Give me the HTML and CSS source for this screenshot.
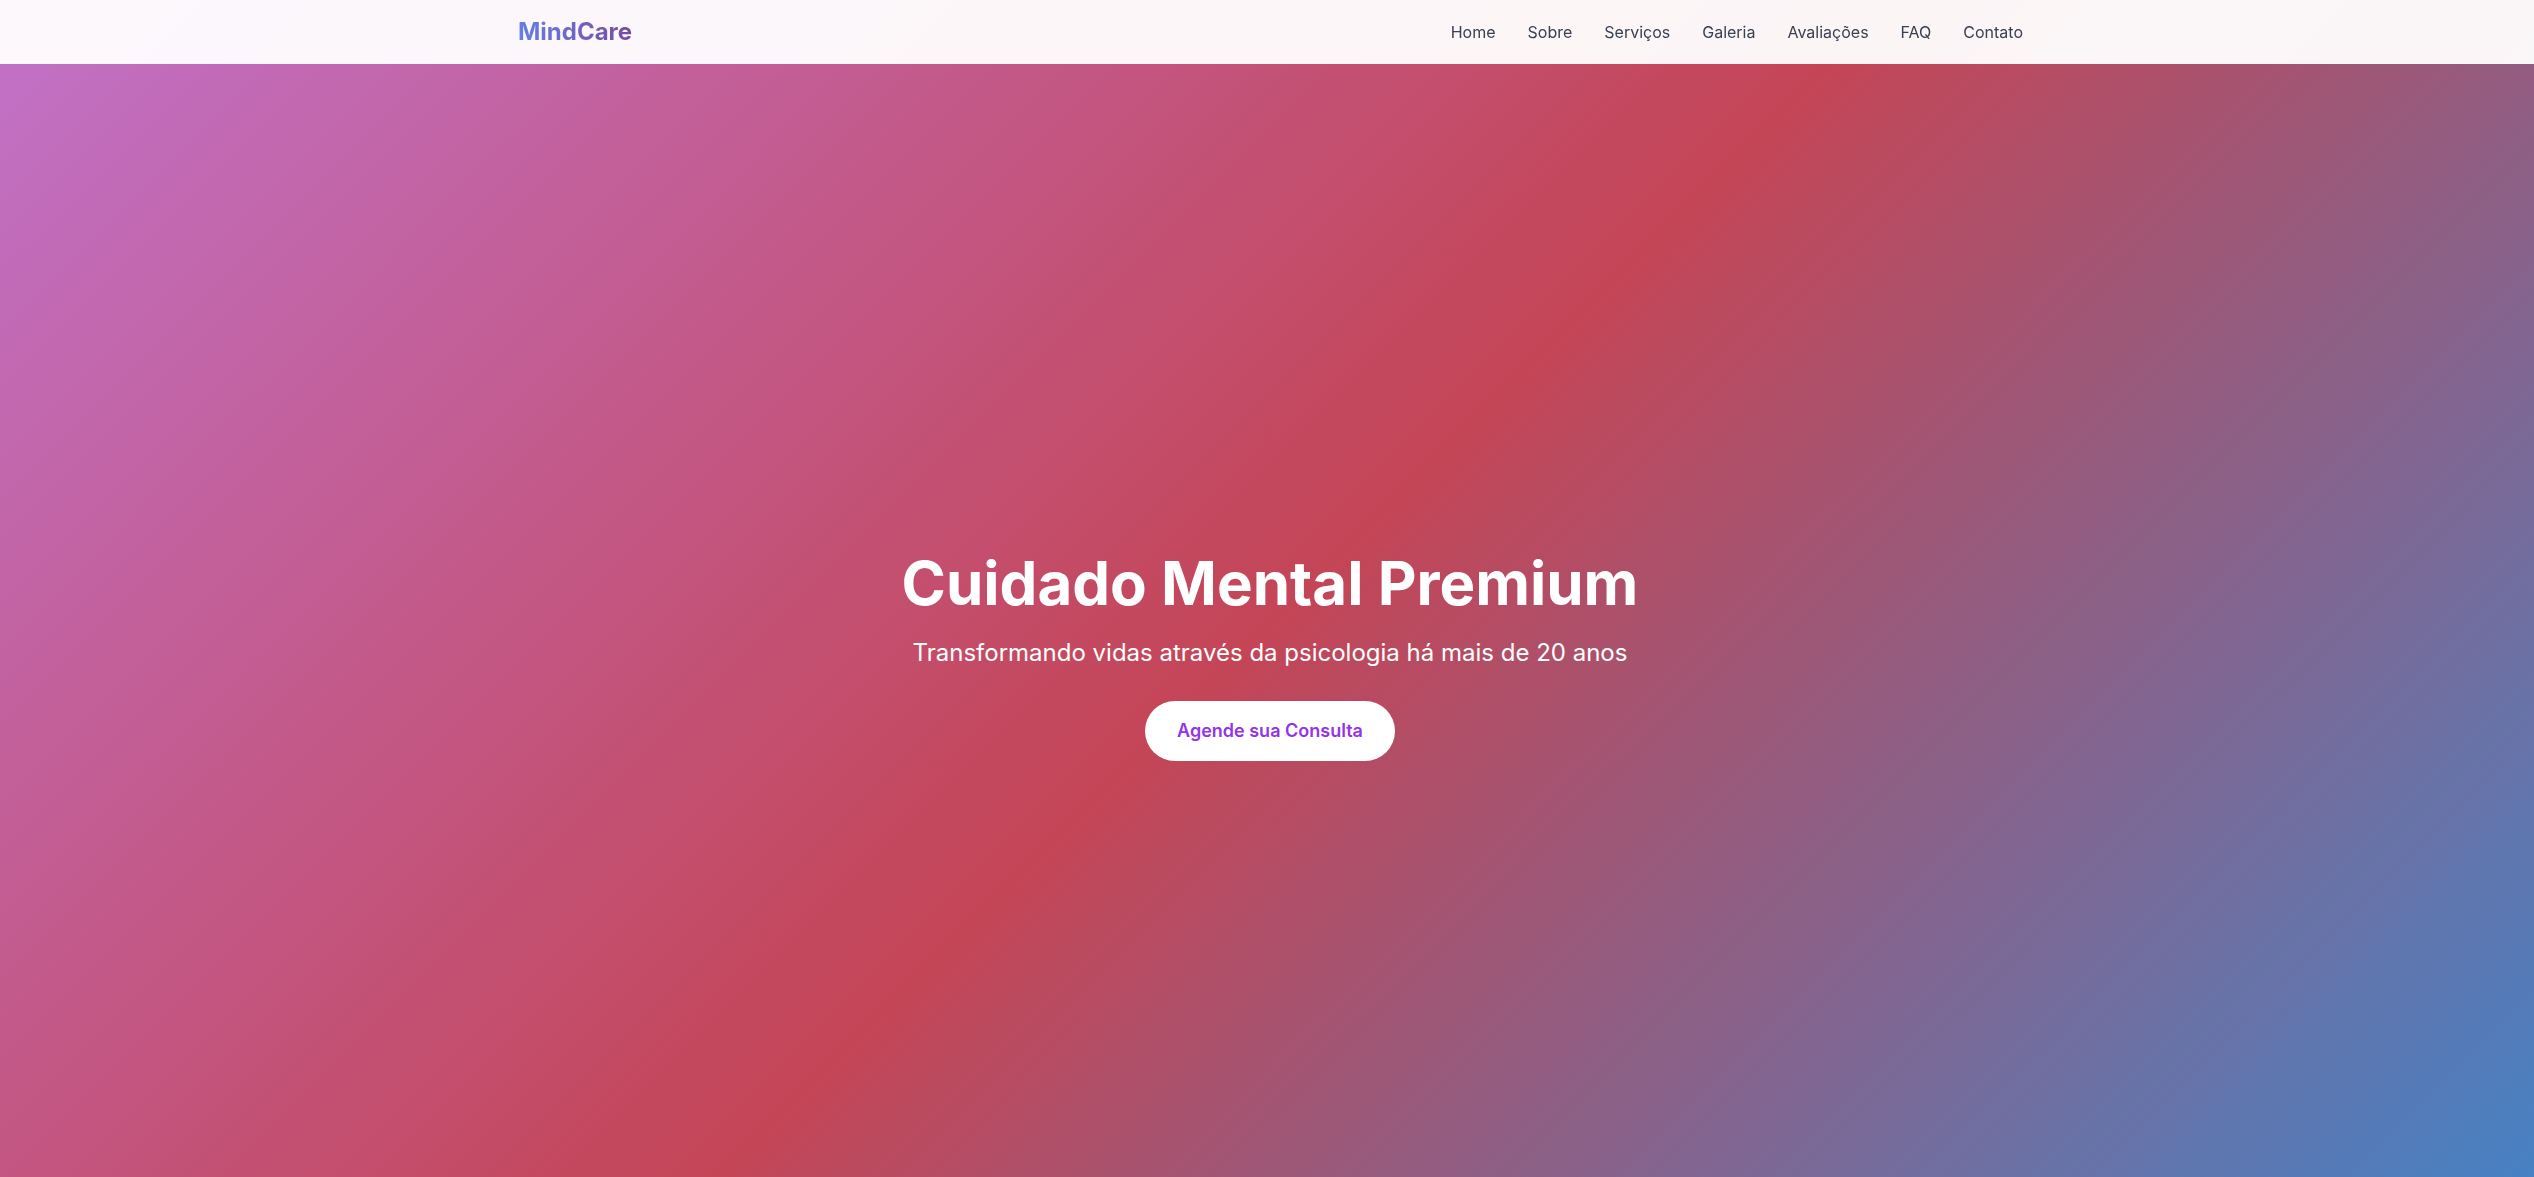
FILE: index.html
```html
<!DOCTYPE html>
<html lang="pt-BR">
<head>
<meta charset="utf-8">
<title>MindCare</title>
<link rel="stylesheet" href="styles.css">
</head>
<body>
<nav class="navbar">
  <div class="nav-inner">
    <a class="logo" href="#">MindCare</a>
    <ul class="nav-links">
      <li><a href="#">Home</a></li>
      <li><a href="#">Sobre</a></li>
      <li><a href="#">Serviços</a></li>
      <li><a href="#">Galeria</a></li>
      <li><a href="#">Avaliações</a></li>
      <li><a href="#">FAQ</a></li>
      <li><a href="#">Contato</a></li>
    </ul>
  </div>
</nav>
<section class="hero">
  <div class="hero-content">
    <h1 class="hero-title">Cuidado Mental Premium</h1>
    <p class="hero-subtitle">Transformando vidas através da psicologia há mais de 20 anos</p>
    <a class="hero-button" href="#">Agende sua Consulta</a>
  </div>
</section>
</body>
</html>
```

FILE: styles.css
```css
* {
  box-sizing: border-box;
}

html, body {
  margin: 0;
  padding: 0;
}

body {
  font-family: "Inter", "Noto Sans", "Liberation Sans", sans-serif;
  overflow: hidden;
}

a {
  text-decoration: none;
}

.navbar {
  position: fixed;
  top: 0;
  left: 0;
  right: 0;
  height: 64px;
  background: rgba(255, 255, 255, 0.95);
  z-index: 10;
}

.nav-inner {
  max-width: 1536px;
  height: 100%;
  margin: 0 auto;
  padding: 0 12px 0 19px;
  display: flex;
  align-items: center;
  justify-content: space-between;
}

.logo {
  font-size: 24px;
  line-height: 32px;
  font-weight: 700;
  background: linear-gradient(90deg, #667eea 0%, #764ba2 100%);
  -webkit-background-clip: text;
  background-clip: text;
  color: transparent;
}

.nav-links {
  list-style: none;
  margin: 0;
  padding: 0;
  display: flex;
  gap: 32px;
}

.nav-links a {
  font-size: 16px;
  line-height: 24px;
  color: #374151;
}

.hero {
  min-height: 100vh;
  padding: 136px 0 0 6px;
  display: flex;
  align-items: center;
  justify-content: center;
  background: linear-gradient(135deg, #c172c9 0%, #c44556 51%, #4782c4 100%);
  color: #ffffff;
  text-align: center;
}

.hero-content {
  display: flex;
  flex-direction: column;
  align-items: center;
}

.hero-title {
  margin: 0 0 24px;
  font-size: 60px;
  line-height: 1;
  font-weight: 700;
}

.hero-subtitle {
  margin: 0 0 32px;
  font-size: 24px;
  line-height: 32px;
  font-weight: 400;
}

.hero-button {
  display: inline-block;
  padding: 16px 32px;
  background: #ffffff;
  color: #9333ea;
  font-size: 18px;
  line-height: 28px;
  font-weight: 600;
  border-radius: 9999px;
}
```
